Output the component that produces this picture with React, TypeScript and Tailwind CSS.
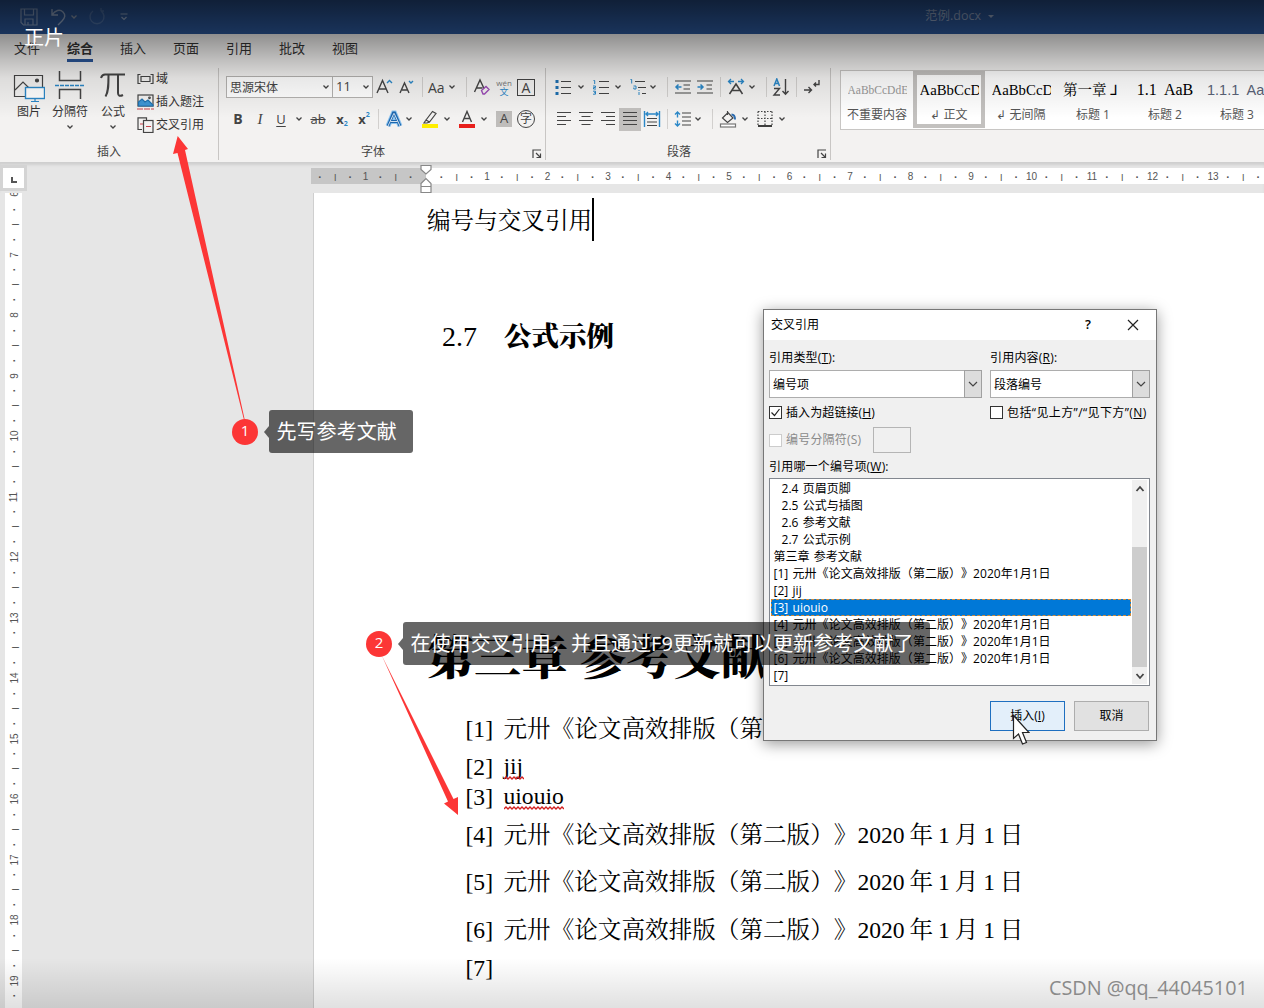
import type { ReactNode } from "react";
import clsx from "clsx";

const uiFont = "font-['Open_Sans','Noto_Sans_CJK_SC',sans-serif]";
const docFont = "font-['Liberation_Serif','Noto_Serif_CJK_SC','Noto_Sans_CJK_SC',serif]";

const tabs = ["文件", "综合", "插入", "页面", "引用", "批改", "视图"];

interface IReference {
    no: string;
    text: string;
    height: string;
    typo?: boolean;
}

const book = "元卅《论文高效排版（第二版）》2020";

const references: IReference[] = [
    { no: "[1]", text: `${book} 年 1 月 1 日`, height: "h-[38px]" },
    { no: "[2]", text: "jij", height: "h-[38px]", typo: true },
    { no: "[3]", text: "uiouio", height: "h-[22px]", typo: true },
    { no: "[4]", text: `${book} 年 1 月 1 日`, height: "h-[54px]" },
    { no: "[5]", text: `${book} 年 1 月 1 日`, height: "h-[40px]" },
    { no: "[6]", text: `${book} 年 1 月 1 日`, height: "h-[56px]" },
    { no: "[7]", text: "", height: "h-[20px]" },
];

const listItems = [
    { text: "2.4 页眉页脚", indent: true },
    { text: "2.5 公式与插图", indent: true },
    { text: "2.6 参考文献", indent: true },
    { text: "2.7 公式示例", indent: true },
    { text: "第三章 参考文献" },
    { text: `[1] ${book}年1月1日` },
    { text: "[2] jij" },
    { text: "[3] uiouio", selected: true },
    { text: `[4] ${book}年1月1日` },
    { text: `[5] ${book}年1月1日` },
    { text: `[6] ${book}年1月1日` },
    { text: "[7]" },
];

interface IIconProps {
    w?: number;
    h?: number;
    className?: string;
    children: ReactNode;
}

const Icon = ({ w = 18, h = 18, className, children }: IIconProps) => (
    <svg width={w} height={h} viewBox={`0 0 ${w} ${h}`} fill="none" stroke="#444" strokeWidth="1.2" className={clsx("shrink-0", className)}>
        {children}
    </svg>
);

const Chevron = ({ className }: { className?: string }) => (
    <Icon w={8} h={6} className={className}>
        <path d="M1.5 1.5 4 4l2.5-2.5" strokeWidth="1.3" />
    </Icon>
);

const Sep = ({ className }: { className?: string }) => (
    <span className={clsx("h-5 w-px shrink-0 bg-[#d2d0ce]", className)} />
);

const Launcher = () => (
    <Icon w={10} h={10}>
        <path d="M1 9V1h8M4 4l4 4M8.500 4.500v4h-4" />
    </Icon>
);

const TitleBar = () => (
    <header className="flex h-[34px] items-center bg-[#2b579a] pl-5">
        <Icon w={18} h={18} className="opacity-80">
            <g stroke="#9fb3d1">
                <path d="M1 1h16v16H3.500L1 14.500zM4.500 1v6h9V1M5 17v-6h8v6M8 14v3" />
            </g>
        </Icon>
        <Icon w={18} h={18} className="ml-3 opacity-80">
            <path d="M2 1v6h6M2 7c3-5 8-6 11-3s2 6-1 9l-4 4" stroke="#b5c4dc" strokeWidth="1.4" />
        </Icon>
        <Chevron className="ml-0.5 opacity-70 invert" />
        <Icon w={18} h={18} className="ml-2.5 opacity-30">
            <path d="M5 3a7 7 0 1 0 8 0M13 3V0M13 3h3" stroke="#9fb3d1" strokeWidth="1.4" />
        </Icon>
        <Icon w={10} h={8} className="ml-[13px] opacity-80">
            <path d="M1.500 1h7M2.500 4 5 6.500 7.500 4" stroke="#b5c4dc" />
        </Icon>
        <div className="ml-[796px] flex items-center text-[12.500px] leading-4 text-[#92a6c8]">
            <span className="-mt-[3px]">范例.docx</span>
            <span className="ml-[7px] -mt-0.5 border-x-[3px] border-t-[3px] border-x-transparent border-t-[#9aaccb]" />
        </div>
    </header>
);

const TabRow = () => (
    <nav className="flex h-[30px] gap-[27px] pl-[14px] text-[13px] text-[#333]">
        {tabs.map((tab, i) => (
            <span key={tab} className={clsx("h-[28px] w-[26px] whitespace-nowrap leading-[28px]", i === 1 && "border-b-[3px] border-[#2b579a] font-bold")}>
                {tab}
            </span>
        ))}
    </nav>
);

interface IGroupProps {
    label: string;
    className: string;
    launcher?: boolean;
    children: ReactNode;
}

const Group = ({ label, className, launcher, children }: IGroupProps) => (
    <section className={clsx("flex shrink-0 flex-col border-r border-[#c8c6c4]", className)}>
        <div className="h-[76px]">{children}</div>
        <div className="grid h-4 grid-cols-[1fr_auto_1fr] items-center text-[12px] leading-4 text-[#444]">
            <span />
            <span className={clsx(launcher && "mr-[18px]")}>{label}</span>
            {launcher && <span className="mr-[3px] mt-1 justify-self-end"><Launcher /></span>}
        </div>
    </section>
);

const InsertGroup = () => (
    <Group label="插入" className="w-[219px]">
        <div className="flex text-[12px] leading-4 text-[#333]">
            <div className="ml-[13px] flex w-8 flex-col items-center pt-1">
                <Icon w={32} h={31}>
                    <path d="M12 24.500H1.500v-21h28V15" />
                    <path d="m2 18 8-8 6 6" />
                    <circle cx="24" cy="8.500" r="1.500" fill="#444" />
                    <rect x="12.500" y="15.500" width="19" height="11" fill="#fff" stroke="#2b88c8" strokeWidth="1.400" />
                    <path d="M22 27v2.500M18 29.500h8" stroke="#2b88c8" />
                </Icon>
                <span className="mt-px">图片</span>
            </div>
            <div className="ml-[7px] flex w-9 flex-col items-center pt-0.5">
                <Icon w={30} h={30}>
                    <path d="M4.500 1v9.500h21V1M4.500 29v-9.500h21V29" strokeWidth="1.500" />
                    <path d="M0 15.500h30" stroke="#2b88c8" strokeWidth="1.500" strokeDasharray="4 1" />
                </Icon>
                <span className="mt-1">分隔符</span>
                <Chevron className="mt-1" />
            </div>
            <div className="ml-[11px] flex w-7 flex-col items-center pt-0.5">
                <Icon w={26} h={30}>
                    <path d="M1 8c1-3 2-3.500 4-3.500h20M8.500 5c0 10 0 17-3 21.500M18 5v18c0 3 2 3.500 5 2" strokeWidth="2" />
                </Icon>
                <span className="mt-1">公式</span>
                <Chevron className="mt-1" />
            </div>
            <div className="ml-2.5 flex flex-col gap-[7px] pt-[3px]">
                <div className="flex items-center">
                    <Icon w={18} h={16}>
                        <path d="M3.500 3.500H1v9h2.500M13.500 3.500H16v9h-2.500M4 5.500h9v5H4z" />
                    </Icon>
                    <span className="ml-px">域</span>
                </div>
                <div className="flex items-center">
                    <Icon w={18} h={16}>
                        <rect x="1" y="1" width="15" height="11" />
                        <path d="m1.500 12 0-4L5 5l3 3 3-2 5 5v1z" fill="#3f96d4" stroke="#2072b0" />
                        <circle cx="12.500" cy="3.800" r=".8" />
                        <path d="M0 15h17" stroke="#c8434a" strokeDasharray="6 1" />
                    </Icon>
                    <span className="ml-px">插入题注</span>
                </div>
                <div className="flex items-center">
                    <Icon w={18} h={16}>
                        <path d="M5 12.500H1V.800h8.500V3" />
                        <rect x="6.500" y="3.500" width="9.500" height="12" />
                        <path d="M3 7h3M9 9.500h5" stroke="#c8434a" />
                    </Icon>
                    <span className="ml-px">交叉引用</span>
                </div>
            </div>
        </div>
    </Group>
);

const FontGroup = () => (
    <Group label="字体" className="w-[327px]" launcher>
        <div className="mt-2 flex h-[22px] items-center pl-[7px] text-[#444]">
            <div className="flex h-[22px] w-[107px] items-center justify-between border border-[#b4b2b0] bg-white pl-[3px] pr-0.5 text-[12px]">
                <span className="mt-0.5">思源宋体</span> <Chevron />
            </div>
            <div className="-ml-px flex h-[22px] w-[41px] items-center justify-between border border-[#b4b2b0] bg-white pl-[3px] pr-0.5 text-[13px]">
                11 <Chevron />
            </div>
            <Icon w={20} className="ml-px">
                <path d="M3 15 8.500 2.500 14 15M5 11h7" strokeWidth="1.400" />
                <path d="m13 5 2.500-2.500L18 5" stroke="#2b88c8" strokeWidth="1.400" />
            </Icon>
            <Icon w={16} className="ml-1">
                <path d="m2 15 4.500-10L11 15M4 12h5.500" strokeWidth="1.400" />
                <path d="m11 3 2 2 2-2" stroke="#2b88c8" strokeWidth="1.400" />
            </Icon>
            <Sep className="ml-2" />
            <span className="ml-[5px] w-[19px] text-[14px]">Aa</span>
            <Chevron className="ml-px" />
            <Sep className="ml-2.5" />
            <Icon className="ml-1.5">
                <path d="M1.500 14 7 2l4 8.500M3.500 10h6" strokeWidth="1.400" />
                <path d="m8.500 12.500 4.500-4 3 3-4.500 4.500h-1.500z" stroke="#9b4bb5" strokeWidth="1.400" />
            </Icon>
            <span className="ml-[5px] flex w-4 flex-col items-center">
                <span className="text-[8px] leading-[8px] text-[#777]">wén</span>
                <span className="text-[9px] leading-[9px] text-[#2b88c8]">文</span>
            </span>
            <span className="ml-[5px] flex h-[17px] w-[18px] items-center justify-center border border-[#444] text-[14px]">A</span>
        </div>
        <div className="mt-[9px] flex h-[24px] items-center pl-[7px] text-[14px] text-[#444]">
            <span className="ml-1 w-4 text-center text-[14px] font-bold leading-4">B</span>
            <span className="ml-1.5 w-4 text-center font-['Liberation_Serif',serif] text-[15px] italic leading-4">I</span>
            <span className="ml-[5px] w-4 text-center text-[13px] leading-4 underline underline-offset-2">U</span>
            <Chevron className="ml-1.5" />
            <span className="ml-1.5 w-[18px] text-center text-[13px] leading-4 line-through">ab</span>
            <span className="ml-[7px] w-4 text-center text-[13px] font-bold leading-4">x<sub className="text-[7px] text-[#2b88c8]">2</sub></span>
            <span className="ml-1.5 w-4 text-center text-[13px] font-bold leading-4">x<sup className="-top-[7px] text-[7px] text-[#2b88c8]">2</sup></span>
            <Sep className="ml-1.5" />
            <Icon w={20} className="ml-[5px]">
                <path d="M4 16 9.500 3h1L16 16M6.500 11.500h7" stroke="#8cc3ee" strokeWidth="5" />
                <path d="M4 16 9.500 3h1L16 16M6.500 11.500h7" stroke="#1c66ad" strokeWidth="3" />
                <path d="M4 16 9.800 3.500h.4L16 16M6.500 11.500h7" stroke="#fff" strokeWidth=".8" />
            </Icon>
            <Chevron className="ml-px" />
            <Icon w={20} className="ml-[7px]">
                <path d="m6 10 6.500-8.500 3.500 2L9.500 12zM6 10l-2 3h3l2.500-1" />
                <path d="M2 16h16" stroke="#ffee00" strokeWidth="4" />
            </Icon>
            <Chevron className="ml-[3px]" />
            <Icon w={20} className="ml-1.5">
                <path d="M5.500 12 10 1.500 14.500 12M7 8.500h6" strokeWidth="1.400" />
                <path d="M2 16h16" stroke="#e8201c" strokeWidth="4" />
            </Icon>
            <Chevron className="ml-[3px]" />
            <span className="ml-2 flex h-4 w-4 items-center justify-center bg-[#bfbdbb] text-[13px]">A</span>
            <span className="ml-[5px] flex h-[18px] w-[18px] items-center justify-center rounded-full border border-[#444] text-[12px] leading-3">字</span>
        </div>
    </Group>
);

const ParagraphGroup = () => (
    <Group label="段落" className="w-[285px]" launcher>
        <div className="mt-2 flex h-[22px] items-center pl-2">
            <Icon>
                <path d="M7 3.500h10M7 9.500h10M7 15.500h10" />
                <path d="M1.500 3.500h3M1.500 9.500h3M1.500 15.500h3" stroke="#1d6fb0" strokeWidth="3" />
            </Icon>
            <Chevron className="ml-[5px]" />
            <Icon className="ml-[7px]">
                <path d="M7 3.500h10M7 9.500h10M7 15.500h10" />
                <path d="M1.500 2.500h1.200v3.500M1 8h2.500v1.500H1.500V11H4M1 13.200h2.500v3H1M2 14.700h1.500" stroke="#2b88c8" strokeWidth="1" />
            </Icon>
            <Chevron className="ml-1" />
            <Icon className="ml-[7px]">
                <path d="M6 3.500h10M9 9.500h8M13 15.500h4" />
                <path d="M1.500 1.500h1.200v4M4.500 8h2.500v3H4.800V9.500M10 12v1M10 14v3" stroke="#2b88c8" strokeWidth="1" />
            </Icon>
            <Chevron className="ml-0.5" />
            <Sep className="ml-2.5" />
            <Icon className="ml-1.5">
                <path d="M1 3h16M9.500 7H16M9.500 11H16M1 15h16" />
                <path d="M7.500 9H2M4.500 6.500 2 9l2.500 2.500" stroke="#2b88c8" strokeWidth="1.500" />
            </Icon>
            <Icon className="ml-1">
                <path d="M1 3h16M10.500 7H16M10.500 11H16M1 15h16" />
                <path d="M1.500 9H7M4.500 6.500 7 9l-2.500 2.500" stroke="#2b88c8" strokeWidth="1.500" />
            </Icon>
            <Sep className="ml-1.5" />
            <Icon className="ml-1.5">
                <path d="m2.500 16 6.500-10 6.500 10M5 12.500h8" strokeWidth="1.500" />
                <path d="M7 3.500H1.500M4 1 1.500 3.500 4 6M11 3.500h5.500M14 1l2.500 2.500L14 6" stroke="#2b88c8" strokeWidth="1.300" />
            </Icon>
            <Chevron className="ml-[3px]" />
            <Sep className="ml-2.5" />
            <Icon className="ml-[5px]">
                <path d="M2 8 4.800 1 7.500 8M3 5.500h3.500" stroke="#2b88c8" strokeWidth="1.500" />
                <path d="M2 10.500h5.500L2 17h6M13.500 1v15M10.500 13l3 3.200 3-3.200" strokeWidth="1.400" />
            </Icon>
            <Sep className="ml-1.5" />
            <Icon className="ml-1.5">
                <path d="M16 2v4.500h-5M13 4.500l-2 2 2 2M1 12h7M5.500 9 8.500 12l-3 3" strokeWidth="1.400" />
            </Icon>
        </div>
        <div className="mt-[9px] flex h-[24px] items-center pl-2.5">
            <Icon w={16}>
                <path d="M1 2.500h14M1 6.500h9M1 10.500h14M1 14.500h9" />
            </Icon>
            <Icon w={16} className="ml-1.5">
                <path d="M1 2.500h14M3.500 6.500h9M1 10.500h14M3.500 14.500h9" />
            </Icon>
            <Icon w={16} className="ml-1.5">
                <path d="M1 2.500h14M6 6.500h9M1 10.500h14M6 14.500h9" />
            </Icon>
            <span className="ml-[3px] flex h-[23px] w-[22px] items-center justify-center bg-[#c3c1bf]">
                <Icon w={16}>
                    <path d="M1 2.500h14M1 6.500h14M1 10.500h14M1 14.500h14" />
                </Icon>
            </span>
            <Icon className="ml-0.5">
                <path d="M1.500 1v16M16.500 1v16M3 4h12M5 2 3 4l2 2M13 2l2 2-2 2" stroke="#2b88c8" strokeWidth="1.400" />
                <path d="M4 8.500h10M4 12h10M4 15.500h10" />
            </Icon>
            <Sep className="ml-1.5" />
            <Icon className="ml-1.5">
                <path d="M8 3h9M8 7h9M8 11h9M8 15h9" />
                <path d="M3.500 7.500V2M1 4.500 3.500 2 6 4.500M3.500 10.500V16M1 13.500 3.500 16 6 13.500" stroke="#2b88c8" strokeWidth="1.400" />
            </Icon>
            <Chevron className="ml-0.5" />
            <Sep className="ml-2.5" />
            <Icon className="ml-1.5">
                <path d="m3.500 8 5.500-5.500L14 8l-5.500 4.500zM8.500 5V1" />
                <path d="M12.500 4.500c2.500 0 3.500 2 3.500 5" stroke="#2b6cb0" strokeWidth="2" />
                <rect x="1.500" y="14" width="15" height="3" stroke="#777" fill="#fff" />
            </Icon>
            <Chevron className="ml-1" />
            <Icon className="ml-[7px]">
                <path d="M2 1.500h14M2 8.500h14M2 1.500v14M9 1.500v14M16 1.500v14" strokeDasharray="1.500 1.500" />
                <path d="M2 16h14" stroke="#111" strokeWidth="1.600" />
            </Icon>
            <Chevron className="ml-1" />
        </div>
    </Group>
);

interface IStyleCardProps {
    sample: string;
    name: string;
    sampleClass: string;
    active?: boolean;
}

const StyleCard = ({ sample, name, sampleClass, active }: IStyleCardProps) => (
    <div className={clsx("flex h-[57px] w-[72px] shrink-0 flex-col items-center overflow-hidden whitespace-nowrap", active && "outline-4 -outline-offset-4 outline-[#c3c1bf]")}>
        <div className={clsx("mt-[9px] h-5 leading-5", sampleClass)}>{sample}</div>
        <div className="mt-[7px] text-[12px] leading-4 text-[#555]">{name}</div>
    </div>
);

const StylesGallery = () => (
    <div className="ml-[9px] mt-0.5 flex h-[60px] flex-1 overflow-hidden border border-r-0 border-[#c8c6c4] bg-white">
        <StyleCard sample="AaBbCcDdEe" name="不重要内容" sampleClass="w-[59px] overflow-hidden font-['Liberation_Serif',serif] text-[11.500px] text-[#999]" />
        <StyleCard sample="AaBbCcDd" name="↲ 正文" sampleClass="w-[59px] overflow-hidden font-['Liberation_Serif',serif] text-[14.800px] text-black" active />
        <StyleCard sample="AaBbCcDd" name="↲ 无间隔" sampleClass="w-[59px] overflow-hidden font-['Liberation_Serif',serif] text-[14.800px] text-black" />
        <StyleCard sample="第一章 ⅃" name="标题 1" sampleClass={clsx(docFont, "w-[60px] overflow-hidden text-[14.500px] text-black")} />
        <StyleCard sample="1.1  AaB" name="标题 2" sampleClass="whitespace-pre font-['Liberation_Serif',serif] text-[16px] text-black" />
        <StyleCard sample="1.1.1  AaB" name="标题 3" sampleClass="w-[60px] whitespace-pre font-['Liberation_Sans',sans-serif] text-[14.500px] text-[#5a6378]" />
    </div>
);

// quarter marks of a ruler: number, dot, tick, dot
const rulerMark = (k: number) => {
    const q = Math.abs(k) % 4;
    if (q === 0) return String(Math.abs(k) / 4);
    return q === 2 ? "|" : "·";
};

const marks = (from: number, to: number) => Array.from({ length: to - from + 1 }, (_, i) => from + i);

const markClass = (k: number) => (k % 4 === 0 ? "text-[10px]" : k % 2 === 0 ? "text-[7px] font-bold" : "text-[11px] font-bold");

const HorizontalRuler = () => (
    <div className="flex h-[31px] bg-[#e6e6e6] font-['Liberation_Sans',sans-serif] text-[#555] shadow-[inset_0_4px_3px_-1px_#cfcfcf]">
        <div className="mt-[3px] flex h-[26px] w-[27px] items-center justify-center border-[3px] border-[#d4d4d4] bg-white">
            <span className="mt-1 h-[6px] w-[6px] border-b-2 border-l-2 border-[#555]" />
        </div>
        <div className="ml-[284px] mt-1.5 flex h-4 w-[115px] overflow-hidden bg-[#c6c6c6] pl-[1.500px]">
            {marks(-7, -1).map((k) => (
                <span key={k} className={clsx("w-[15.140px] shrink-0 text-center leading-[18px]", markClass(k))}>{rulerMark(k)}</span>
            ))}
        </div>
        <div className="mt-1.5 flex h-4 flex-1 overflow-hidden bg-white pl-2">
            {marks(1, 55).map((k) => (
                <span key={k} className={clsx("w-[15.140px] shrink-0 text-center leading-[18px]", markClass(k))}>{rulerMark(k)}</span>
            ))}
        </div>
    </div>
);

const VerticalRuler = () => (
    <div className="ml-[5px] w-[17px] overflow-hidden bg-white font-['Liberation_Sans',sans-serif] text-[#555]">
        <div className="-mt-[6.500px] ml-0.5">
            {marks(24, 80).map((k) => (
                <div key={k} className="flex h-[15.140px] items-center justify-center">
                    <span className={clsx("-rotate-90 leading-none", markClass(k))}>{rulerMark(k)}</span>
                </div>
            ))}
        </div>
    </div>
);

// red spell-check squiggle under a word
const Squiggle = ({ width }: { width: number }) => (
    <Icon w={width} h={4} className="-mt-[3px]">
        <path
            d={`M0 3${Array.from({ length: Math.ceil(width / 4) }, () => "l2-2l2 2").join("")}`}
            stroke="#d32020"
            strokeWidth="1.300"
        />
    </Icon>
);

const DocumentPage = () => (
    <main className={clsx("ml-[291px] flex-1 overflow-hidden whitespace-nowrap border-l border-[#cfcfcf] bg-white text-[23.600px] text-black [text-spacing-trim:space-all]", docFont)}>
        <div className="ml-[113px] flex h-[54px] items-center">
            <span className="mt-[3px]">编号与交叉引用</span><span className="-mt-0.5 h-[43px] w-[1.500px] bg-black" />
        </div>
        <h2 className="ml-32 mt-[65px] flex h-[50px] items-center text-[28px]">
            2.7<span className="ml-[27px] text-[27.500px] font-black">公式示例</span>
        </h2>
        <h1 className="ml-[113px] mt-[266px] flex h-[60px] items-center text-[47px] font-black">第三章 参考文献</h1>
        <ol className="ml-[151.500px] mt-[23px]">
            {references.map(({ no, text, height, typo }) => (
                <li key={no} className={clsx("flex items-center [word-spacing:-1px]", height)}>
                    <span className="w-[38px]">{no}</span>
                    {typo ? (
                        <span className="-mt-1 flex flex-col leading-[26px]">
                            {text}
                            <Squiggle width={text.length > 3 ? 60 : 20} />
                        </span>
                    ) : (
                        <span>{text}</span>
                    )}
                </li>
            ))}
        </ol>
    </main>
);

const Select = ({ value, className }: { value: string; className: string }) => (
    <div className={clsx("flex h-7 border border-[#adadad] bg-white", className)}>
        <span className="flex-1 pl-[3px] leading-[27px]">{value}</span>
        <span className="-m-px flex w-[18px] items-center justify-center border border-[#a0a0a0] bg-[#dcdcdc]">
            <Icon w={10} h={7}><path d="m1 1 4 4 4-4" /></Icon>
        </span>
    </div>
);

const CheckBox = ({ checked, disabled }: { checked?: boolean; disabled?: boolean }) => (
    <span className={clsx("mr-1 flex h-[13px] w-[13px] shrink-0 items-center justify-center border bg-white", disabled ? "border-[#ccc]" : "border-[#333]")}>
        {checked && <Icon w={11} h={11}><path d="m1.500 5.500 3 3 5-6.500" stroke="#222" /></Icon>}
    </span>
);

const CrossReferenceDialog = () => (
    <div className="absolute left-[763px] top-[309px] h-[432px] w-[394px] border border-[#777] bg-[#f0f0f0] text-[12px] text-black shadow-[0_3px_14px_rgba(0,0,0,0.400)] [text-spacing-trim:space-all]">
        <div className="flex h-[30px] items-center bg-white pl-[7px]">
            <span className="flex-1">交叉引用</span>
            <span className="mr-[36px] text-[13px] font-semibold">?</span>
            <Icon w={12} h={12} className="mr-[17px]"><path d="m1 1 10 10M11 1 1 11" stroke="#222" /></Icon>
        </div>
        <div className="px-[5px]">
            <div className="mt-[9px] flex h-[18px] items-center tracking-[0.200px]">
                <span className="w-[221px]">引用类型(<u>T</u>):</span>
                <span>引用内容(<u>R</u>):</span>
            </div>
            <div className="mt-[3px] flex gap-2">
                <Select value="编号项" className="w-[213px]" />
                <Select value="段落编号" className="w-[160px]" />
            </div>
            <div className="mt-[5px] flex h-[18px] items-center whitespace-nowrap">
                <span className="flex w-[221px] items-center"><CheckBox checked /><span className="mt-0.5 tracking-[0.100px]">插入为超链接(<u>H</u>)</span></span>
                <CheckBox /><span className="mt-0.5 tracking-[0.400px]">包括“见上方”/“见下方”(<u>N</u>)</span>
            </div>
            <div className="mt-[6px] flex h-[26px] items-center text-[#8a8a8a]">
                <CheckBox disabled />
                <span className="w-[87px] tracking-[0.200px]">编号分隔符(S)</span>
                <span className="h-[26px] w-[38px] border border-[#b5b5b5]" />
            </div>
            <div className="mt-[5px] h-[17px] leading-[17px] tracking-[0.200px]">引用哪一个编号项(<u>W</u>):</div>
            <div className="mt-[3px] flex h-[208px] w-[381px] border border-[#82878f] bg-white py-px pl-px">
                <ul className="w-[360px] whitespace-pre">
                    {listItems.map(({ text, indent, selected }) => (
                        <li key={text} className={clsx("h-[17px] leading-[18px] tracking-[0.040px] [word-spacing:1px]", indent ? "pl-[10.500px]" : "pl-[2.500px]", selected && "outline-1 -outline-offset-1 outline-dashed outline-[#d08a3a] bg-[#0078d7] text-white")}>
                            {text}
                        </li>
                    ))}
                </ul>
                <div className="ml-px flex w-[15px] flex-col items-center bg-[#f0f0f0]">
                    <Icon w={10} h={8} className="mt-[5px]"><path d="m1.500 6 3.500-4 3.500 4" strokeWidth="1.800" /></Icon>
                    <span className="mt-[54px] h-[120px] w-[15px] bg-[#cdcdcd]" />
                    <Icon w={10} h={8} className="mt-[5px]"><path d="m1.500 2 3.500 4 3.500-4" strokeWidth="1.800" /></Icon>
                </div>
            </div>
            <div className="mt-[15px] flex justify-end gap-[9px] pr-[2px]">
                <button className="h-[30px] w-[75px] border-[1.500px] border-[#1e6fc0] bg-[#e3effa]">插入(<u>I</u>)</button>
                <button className="h-[30px] w-[75px] border border-[#adadad] bg-[#e1e1e1]">取消</button>
            </div>
        </div>
    </div>
);

const Callout = ({ no, text, className, boxClass }: { no: string; text: string; className: string; boxClass: string }) => (
    <div className={clsx("absolute flex items-center text-white", className)}>
        <span className="flex h-[26px] w-[26px] items-center justify-center rounded-full bg-[#fc3636] pb-0.5 text-[15px]">{no}</span>
        <span className="ml-[5.500px] border-y-[6px] border-r-[5.500px] border-y-transparent border-r-black/60" />
        <span className={clsx("h-[43px] whitespace-nowrap rounded-[3px] bg-black/60 pl-2 text-[20px] leading-[44px] tracking-[0.050px]", boxClass)}>{text}</span>
    </div>
);

const App = () => {
    return (
        <div className={clsx("relative flex h-[1008px] w-[1264px] flex-col overflow-hidden bg-[#e6e6e6]", uiFont)}>
            <TitleBar />
            <div className="h-[128px] bg-[#f3f2f1]">
                <TabRow />
                <div className="flex pt-1">
                    <InsertGroup />
                    <FontGroup />
                    <ParagraphGroup />
                    <StylesGallery />
                </div>
            </div>
            <HorizontalRuler />
            <div className="flex min-h-0 flex-1">
                <VerticalRuler />
                <DocumentPage />
            </div>

            {/* indent markers sit over the ruler */}
            <Icon w={12} h={28} className="absolute left-[420px] top-[165px]">
                <path d="M1 .500h10v4L6 9 1 4.500z" fill="#fff" stroke="#888" />
                <path d="M1 27.500v-9L6 13.500l5 5v9zM1 21.500h10" fill="#fff" stroke="#888" />
            </Icon>

            <CrossReferenceDialog />

            <div className="pointer-events-none absolute inset-x-0 top-0 h-[120px] bg-[linear-gradient(rgba(0,0,0,0.640)_0px,rgba(0,0,0,0.410)_34px,rgba(0,0,0,0.210)_60px,rgba(0,0,0,0.090)_78px,transparent_118px)]" />
            <div className="pointer-events-none absolute inset-x-0 bottom-0 h-[50px] bg-linear-to-b from-transparent to-black/12" />

            <svg className="absolute inset-0" width="1264" height="1008" fill="#fc3636">
                <path d="M244.800 420 185 150l3-1-10.300-13L173 154l4.500-1 66.500 267z" />
                <path d="M381.500 655 448 801.500l-4 2 14 11.500v-18l-4.500 2z" />
            </svg>
            <Callout no="1" text="先写参考文献" className="left-[232px] top-[410px]" boxClass="w-[144px]" />
            <Callout no="2" text="在使用交叉引用，并且通过F9更新就可以更新参考文献了" className="left-[366px] top-[622px]" boxClass="w-[527px]" />

            <svg className="absolute left-[1012px] top-[714px]" width="18" height="32" viewBox="0 0 18 32">
                <path d="M1.500 1.500v23l5-4.500 4 10 4-1.500-4-10h6.500z" fill="#fff" stroke="#222" strokeWidth="1.200" />
            </svg>

            <span className="absolute left-6 top-[25px] text-[20px] leading-[26px] text-white">正片</span>
            <span className="absolute left-[1049px] top-[976px] whitespace-nowrap text-[19.800px] leading-6 text-[#8a8a8a]">CSDN @qq_44045101</span>
        </div>
    );
};

export default App;
